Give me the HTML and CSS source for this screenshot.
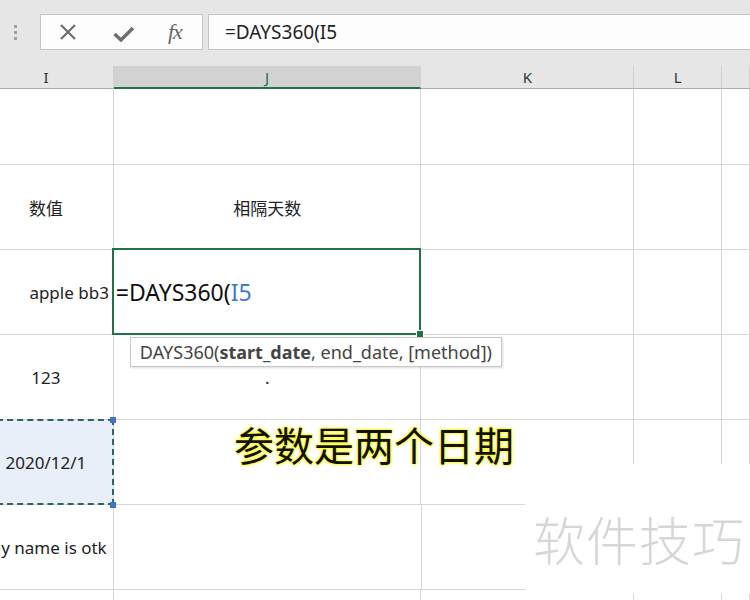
FILE: index.html
```html
<!DOCTYPE html>
<html lang="zh-CN">
<head>
    <meta charset="UTF-8">
    <title>DAYS360</title>
    <link rel="stylesheet" href="styles.css">
</head>
<body>
    <div class="toolbar">
        <div class="grip"><span></span><span></span><span></span></div>
        <div class="fx-buttons">
            <svg class="icon-x" width="18" height="18" viewBox="0 0 18 18">
                <path d="M2 2 L16 16 M16 2 L2 16" stroke="#6e6e6e" stroke-width="2.2" fill="none"/>
            </svg>
            <svg class="icon-check" width="22" height="16" viewBox="0 0 22 16">
                <path d="M1.5 8 L8 14 L20 2" stroke="#6e6e6e" stroke-width="3.4" fill="none"/>
            </svg>
            <span class="fx">fx</span>
        </div>
        <div class="formula-input">=DAYS360(I5</div>
    </div>

    <div class="sheet">
        <div class="col-head">
            <div class="h col-i">I</div>
            <div class="h col-j selected">J</div>
            <div class="h col-k">K</div>
            <div class="h col-l">L</div>
            <div class="h col-m"></div>
        </div>

        <div class="row first">
            <div class="cell col-i"></div>
            <div class="cell col-j"></div>
            <div class="cell col-k"></div>
            <div class="cell col-l"></div>
            <div class="cell col-m"></div>
        </div>
        <div class="row">
            <div class="cell col-i">数值</div>
            <div class="cell col-j">相隔天数</div>
            <div class="cell col-k"></div>
            <div class="cell col-l"></div>
            <div class="cell col-m"></div>
        </div>
        <div class="row">
            <div class="cell col-i right">apple bb3</div>
            <div class="cell col-j active">
                <span class="editing">=DAYS360(<span class="ref">I5</span></span>
                <div class="tip">DAYS360(<b>start_date</b>, end_date, [method])</div>
            </div>
            <div class="cell col-k"></div>
            <div class="cell col-l"></div>
            <div class="cell col-m"></div>
        </div>
        <div class="row">
            <div class="cell col-i">123</div>
            <div class="cell col-j">.</div>
            <div class="cell col-k"></div>
            <div class="cell col-l"></div>
            <div class="cell col-m"></div>
        </div>
        <div class="row">
            <div class="cell col-i copied">2020/12/1</div>
            <div class="cell col-j"></div>
            <div class="cell col-k"></div>
            <div class="cell col-l"></div>
            <div class="cell col-m"></div>
        </div>
        <div class="row">
            <div class="cell col-i">my name is otk</div>
            <div class="cell col-j"></div>
            <div class="cell col-k"></div>
            <div class="cell col-l"></div>
            <div class="cell col-m"></div>
        </div>
        <div class="row">
            <div class="cell col-i"></div>
            <div class="cell col-j"></div>
            <div class="cell col-k"></div>
            <div class="cell col-l"></div>
            <div class="cell col-m"></div>
        </div>

        <div class="callout">参数是两个日期</div>
        <div class="watermark">软件技巧</div>
    </div>
</body>
</html>
```

FILE: styles.css
```css
* {
    box-sizing: border-box;
    margin: 0;
    padding: 0;
}
body {
    width: 750px;
    height: 600px;
    overflow: hidden;
    background-color: #fff;
    font-family: "Noto Sans", "Noto Sans CJK SC", sans-serif;
    color: #222;
}
.toolbar {
    height: 66px;
    background-color: #e6e6e6;
    display: flex;
    align-items: flex-start;
    padding-top: 14px;
}
.grip {
    width: 40px;
    height: 36px;
    display: flex;
    flex-direction: column;
    align-items: center;
    justify-content: center;
    gap: 3px;
    padding-right: 10px;
}
.grip span {
    width: 3px;
    height: 3px;
    background-color: #a0a0a0;
}
.fx-buttons {
    width: 163px;
    height: 36px;
    background-color: #fdfdfd;
    border: 1px solid #c6c6c6;
    display: flex;
    align-items: center;
    padding-left: 18px;
}
.icon-x {
    margin-right: 36px;
}
.icon-check {
    margin-top: 4px;
    margin-right: 33px;
}
.fx {
    font-family: "Liberation Serif", serif;
    font-style: italic;
    font-size: 22px;
    color: #666;
    letter-spacing: -1px;
}
.formula-input {
    flex: 1;
    margin-left: 5px;
    height: 36px;
    background-color: #fdfdfd;
    border: 1px solid #c6c6c6;
    border-right: none;
    padding-left: 16px;
    font-size: 19px;
    line-height: 34px;
    color: #222;
}

.sheet {
    position: relative;
}
.col-head, .row {
    display: flex;
}
.col-i { width: 114px; }
.col-j { width: 308px; }
.col-k { width: 213px; }
.col-l { width: 88px; }
.col-m { width: 28px; }

.col-head {
    height: 23px;
    background-color: #e6e6e6;
}
.h {
    border-right: 1px solid #cfcfcf;
    border-bottom: 1px solid #ababab;
    font-size: 15px;
    color: #333;
    text-align: center;
    line-height: 22px;
}
.h.col-i {
    padding-right: 21px;
}
.h.selected {
    background-color: #d2d2d2;
    border-bottom: 2px solid #217346;
    color: #217346;
}

.row {
    height: 85px;
}
.row.first {
    height: 76px;
}
.cell {
    border-right: 1px solid #d6d6d6;
    border-bottom: 1px solid #d6d6d6;
    display: flex;
    align-items: center;
    justify-content: center;
    white-space: nowrap;
    font-size: 17px;
    color: #222;
}
.cell.col-i {
    padding-right: 21px;
}
.cell.col-i.right {
    justify-content: flex-end;
    padding-right: 4px;
}

.active {
    position: relative;
    justify-content: flex-start;
    padding-left: 2px;
}
.active::after {
    content: "";
    position: absolute;
    left: -2px;
    top: -2px;
    right: -1px;
    bottom: -1px;
    border: 2px solid #217346;
}
.active::before {
    content: "";
    position: absolute;
    right: -4px;
    bottom: -4px;
    width: 6px;
    height: 6px;
    background-color: #217346;
    border: 1px solid #fff;
    z-index: 2;
}
.editing {
    font-size: 23px;
    color: #111;
}
.ref {
    color: #3c7bc6;
}
.tip {
    position: absolute;
    left: 16px;
    top: 87px;
    height: 30px;
    padding: 0 9px;
    background-color: #fff;
    border: 1px solid #c8c8c8;
    box-shadow: 1px 1px 2px rgba(0, 0, 0, 0.15);
    font-size: 18px;
    line-height: 28px;
    color: #444;
    z-index: 3;
}
.tip b {
    font-weight: bold;
    color: #444;
}

.copied {
    position: relative;
    background-color: #e8eff8;
}
.copied::after {
    content: "";
    position: absolute;
    left: -3px;
    top: -1px;
    right: -1px;
    bottom: -1px;
    border: 2px dashed #2c6363;
}
.copied::before {
    content: "";
    position: absolute;
    right: -3px;
    top: -3px;
    width: 6px;
    height: 6px;
    background-color: #4472c4;
    box-shadow: 0 85px 0 #4472c4;
    z-index: 2;
}

.callout {
    position: absolute;
    left: 234px;
    top: 349px;
    font-family: "Noto Sans CJK SC", sans-serif;
    font-size: 40px;
    font-weight: 400;
    color: #111;
    text-shadow: 0 0 2px #ffff00, 0 0 3px #ffff00, 0 0 3px #f0f000;
    white-space: nowrap;
}
.watermark {
    position: absolute;
    left: 525px;
    top: 398px;
    width: 225px;
    height: 130px;
    background-color: #fff;
    padding: 37px 0 0 8px;
    font-family: "Noto Sans CJK SC", sans-serif;
    font-size: 52px;
    font-weight: 300;
    color: #d6d6d6;
    letter-spacing: 1px;
    white-space: nowrap;
}
```
